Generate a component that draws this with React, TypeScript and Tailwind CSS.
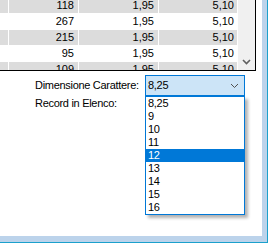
import React from "react";

const rows = [
  { a: "118", b: "1,95", c: "5,10" },
  { a: "267", b: "1,95", c: "5,10" },
  { a: "215", b: "1,95", c: "5,10" },
  { a: "95", b: "1,95", c: "5,10" },
  { a: "109", b: "1,95", c: "5,10" },
];

const sizes = ["8,25", "9", "10", "11", "12", "13", "14", "15", "16"];

const font = "font-['Liberation_Sans',Arial,sans-serif]";

function Grid() {
  return (
    <div className="flex h-[71px] w-[256px] border-r border-b border-black">
      <div className="h-[70px] w-[238px] overflow-hidden">
        <div className="-mt-[2px] flex flex-col">
          {rows.map((r, i) => (
            <div
              key={i}
              className={
                "flex h-[16px] border-b border-white " +
                (i % 2 === 0 ? "bg-[#dcdcdc]" : "bg-white")
              }
            >
              <div className="w-[9px] border-r border-white" />
              <div className="w-[70px] border-r border-white pr-[4px] text-right leading-[15px]">{r.a}</div>
              <div className="w-[80px] border-r border-white pr-[4px] text-right leading-[15px]">{r.b}</div>
              <div className="w-[79px] border-r border-white pr-[3px] text-right leading-[15px]">{r.c}</div>
            </div>
          ))}
        </div>
      </div>
      <div className="flex h-[70px] w-[17px] flex-col justify-end bg-[#f0f0f0]">
        <div className="flex h-[17px] items-center justify-center">
          <svg width="9" height="6" viewBox="0 0 9 6">
            <path d="M1 1 L4.5 4.5 L8 1" fill="none" stroke="#606060" strokeWidth="1.6" />
          </svg>
        </div>
      </div>
    </div>
  );
}

export default function App() {
  return (
    <div className={`h-[246px] w-[270px] bg-white text-[11px] text-black ${font}`}>
      <div className="h-[243px] w-[268px] border-r border-b border-[#1ba0cc] bg-[#bcd3eb] pr-[5px] pb-[6px]">
        <div className="relative h-[236px] w-[262px] bg-white">
          <Grid />
          <div className="mt-[4px] grid grid-cols-[110px_100px] pl-[35px] tracking-[-0.3px]">
            <div className="flex h-[21px] items-center leading-[13px]">Dimensione Carattere:</div>
            <div className="flex h-[21px] items-center justify-between border border-[#0078d7] bg-[#cce4f7] pr-[5px] pl-[2px] leading-[13px]">
              <span>8,25</span>
              <svg width="9" height="6" viewBox="0 0 9 6">
                <path d="M1 1 L4.5 4.5 L8 1" fill="none" stroke="#505050" strokeWidth="1" />
              </svg>
            </div>
            <div className="pt-[1px] leading-[13px]">Record in Elenco:</div>
            <div />
          </div>
          <div className="absolute top-[96px] left-[145px] w-[100px] border border-[#0078d7] bg-white shadow-[3px_3px_3px_rgba(0,0,0,0.3)]">
            {sizes.map((s) => (
              <div
                key={s}
                className={
                  "h-[13px] pl-[2px] leading-[13px] tracking-[-0.3px] " +
                  (s === "12" ? "bg-[#0078d7] text-white" : "")
                }
              >
                {s}
              </div>
            ))}
          </div>
        </div>
      </div>
    </div>
  );
}
